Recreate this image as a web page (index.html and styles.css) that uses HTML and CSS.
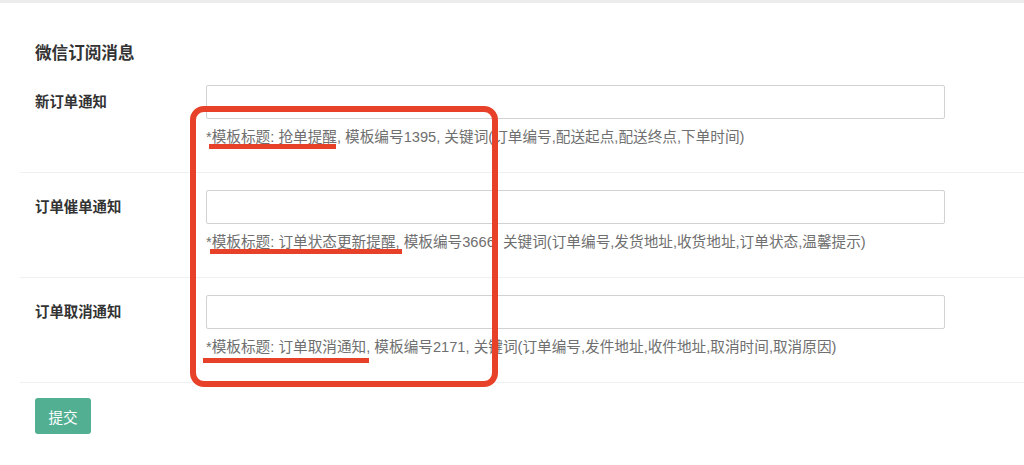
FILE: index.html
```html
<!DOCTYPE html>
<html lang="zh-CN">
<head>
<meta charset="utf-8">
<title>微信订阅消息</title>
<link rel="stylesheet" href="styles.css">
</head>
<body>
<div class="page">
  <div class="topbar"></div>
  <div class="panel">
    <h3 class="title">微信订阅消息</h3>
    <div class="row">
      <div class="label">新订单通知</div>
      <div class="field">
        <input class="input" type="text">
        <div class="help">*模板标题: 抢单提醒, 模板编号1395, 关键词(订单编号,配送起点,配送终点,下单时间)</div>
      </div>
    </div>
    <div class="row">
      <div class="label">订单催单通知</div>
      <div class="field">
        <input class="input" type="text">
        <div class="help">*模板标题: 订单状态更新提醒, 模板编号3666, 关键词(订单编号,发货地址,收货地址,订单状态,温馨提示)</div>
      </div>
    </div>
    <div class="row">
      <div class="label">订单取消通知</div>
      <div class="field">
        <input class="input" type="text">
        <div class="help">*模板标题: 订单取消通知, 模板编号2171, 关键词(订单编号,发件地址,收件地址,取消时间,取消原因)</div>
      </div>
    </div>
    <div class="actions">
      <button class="btn" type="button">提交</button>
    </div>
  </div>
  <div class="mark-box"></div>
  <div class="mark-line mark-1"></div>
  <div class="mark-line mark-2"></div>
  <div class="mark-line mark-3"></div>
</div>
</body>
</html>
```

FILE: styles.css
```css
html, body {
  margin: 0;
  padding: 0;
  background: #fff;
}
body {
  font-family: "Liberation Sans", "Noto Sans CJK SC", sans-serif;
  color: #333;
  font-size: 14px;
}
.page {
  position: relative;
  width: 1024px;
  height: 465px;
  overflow: hidden;
}
.topbar {
  height: 3px;
  background: #ececec;
}
.panel {
  padding-left: 20px;
}
.title {
  margin: 41px 0 4px;
  padding-left: 15px;
  font-size: 16.6px;
  line-height: 20px;
  font-weight: bold;
  color: #333;
}
.row {
  display: flex;
  padding: 17px 79px 25px 15px;
  border-bottom: 1px solid #eef1f1;
}
.label {
  width: 171px;
  flex: none;
  font-size: 14.4px;
  line-height: 34px;
  font-weight: bold;
  color: #333;
}
.field {
  flex: 1;
  display: flex;
  flex-direction: column;
}
.input {
  box-sizing: border-box;
  width: 100%;
  height: 34px;
  margin: 0;
  border: 1px solid #d2d2d2;
  border-radius: 2px;
  background: #fff;
  outline: none;
}
.help {
  margin-top: 8px;
  line-height: 20px;
  font-size: 14.65px;
  color: #6f6f6f;
  white-space: nowrap;
}
.actions {
  padding: 15px 0 0 15px;
}
.btn {
  width: 56px;
  height: 36px;
  border: none;
  border-radius: 3px;
  background: #52af92;
  color: #fff;
  font-family: "Liberation Sans", "Noto Sans CJK SC", sans-serif;
  font-size: 14.6px;
  padding: 0;
}
.mark-box {
  position: absolute;
  left: 190px;
  top: 106px;
  width: 308px;
  height: 281px;
  box-sizing: border-box;
  border: 6px solid #e8412a;
  border-radius: 14px;
}
.mark-line {
  position: absolute;
  height: 5px;
  background: #e8412a;
}
.mark-1 { left: 209px; top: 144px; width: 127px; }
.mark-2 { left: 210px; top: 249px; width: 192px; }
.mark-3 { left: 203px; top: 358px; width: 166px; }
```
